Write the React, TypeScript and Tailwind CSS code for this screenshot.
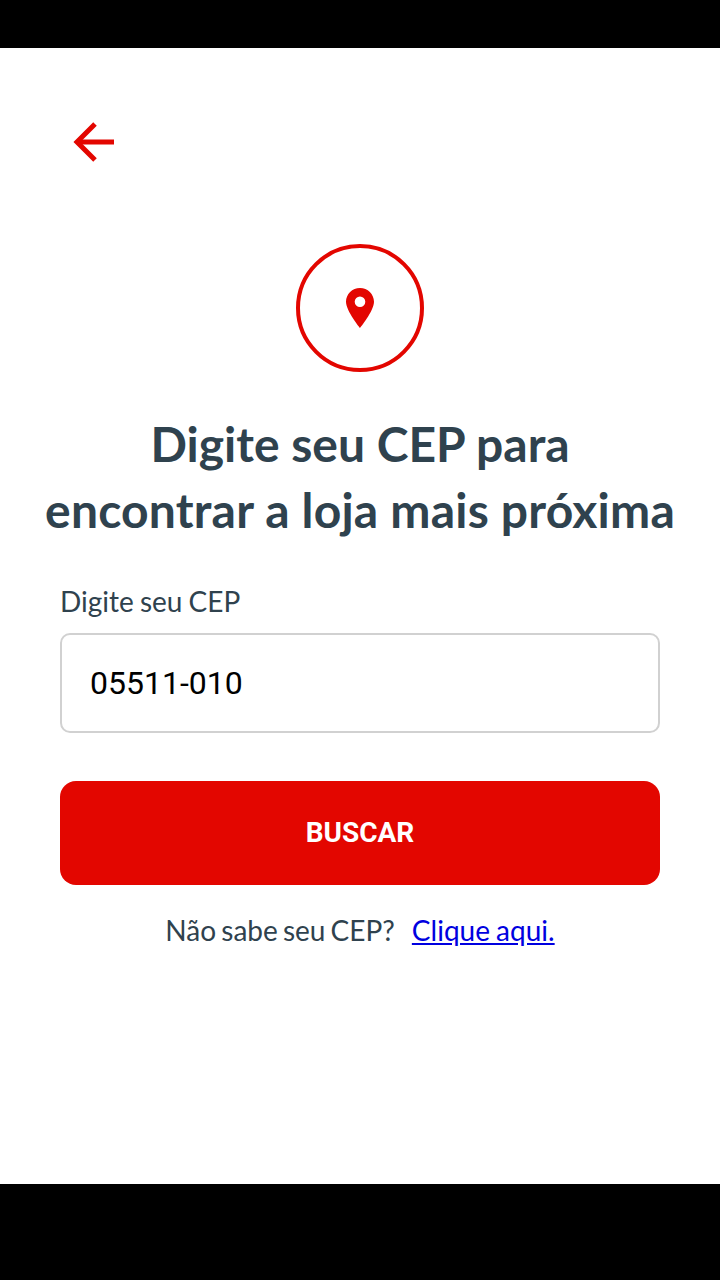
export default function App() {
  return (
    <div className="w-[720px] h-[1280px] flex flex-col bg-black font-['Lato',sans-serif]">
      <div className="h-12 shrink-0" />

      <main className="h-[1136px] shrink-0 bg-white px-[60px]">
        {/* Back arrow */}
        <div className="pt-[74px] -ml-[60px] pl-[73px] h-[136px]">
          <svg width="42" height="40" viewBox="0 0 42 40" fill="none" stroke="#e30600" strokeWidth="5" className="block">
            <path d="M41 20H5" />
            <path d="M22 2 4 20l18 18" />
          </svg>
        </div>

        {/* Pin */}
        <div className="mt-[60px] flex justify-center">
          <div className="w-32 h-32 rounded-full border-4 border-[#e30600] flex items-center justify-center">
            <svg width="28" height="40" viewBox="0 0 28 40" className="block">
              <path
                fillRule="evenodd"
                fill="#e30600"
                d="M14 0C6.300 0 0 6.200 0 13.800 0 23 14 40 14 40s14-17 14-26.200C28 6.200 21.700 0 14 0Zm0 19a5.300 5.300 0 1 1 0-10.600A5.300 5.300 0 0 1 14 19Z"
              />
            </svg>
          </div>
        </div>

        <h1 className="-mx-[60px] mt-[39px] text-center text-[48px] leading-[66px] font-bold text-[#2f424e]">
          Digite seu CEP para
          <br />
          <span className="tracking-[0.2px]">encontrar a loja mais próxima</span>
        </h1>

        <label className="block mt-[40px] text-[28px] leading-[36px] text-[#2f424e] [word-spacing:-1px]">Digite seu CEP</label>
        <div className="mt-[14px] h-[100px] rounded-[10px] border-2 border-[#d1d1d1] flex items-center px-[28px] font-['Roboto',sans-serif] text-[32px] text-black">
          05511-010
        </div>

        <button className="mt-12 w-full h-[104px] rounded-[16px] bg-[#e30600] text-white font-['Roboto',sans-serif] font-bold text-[28px]">
          BUSCAR
        </button>

        <p className="mt-[27px] text-center text-[28px] leading-[36px] text-[#2f424e] [word-spacing:-2px]">
          Não sabe seu CEP?
          <a href="#" className="ml-[17px] text-[#0000e0] underline [word-spacing:-1px]">
            Clique aqui.
          </a>
        </p>
      </main>

      <div className="flex-1" />
    </div>
  )
}
